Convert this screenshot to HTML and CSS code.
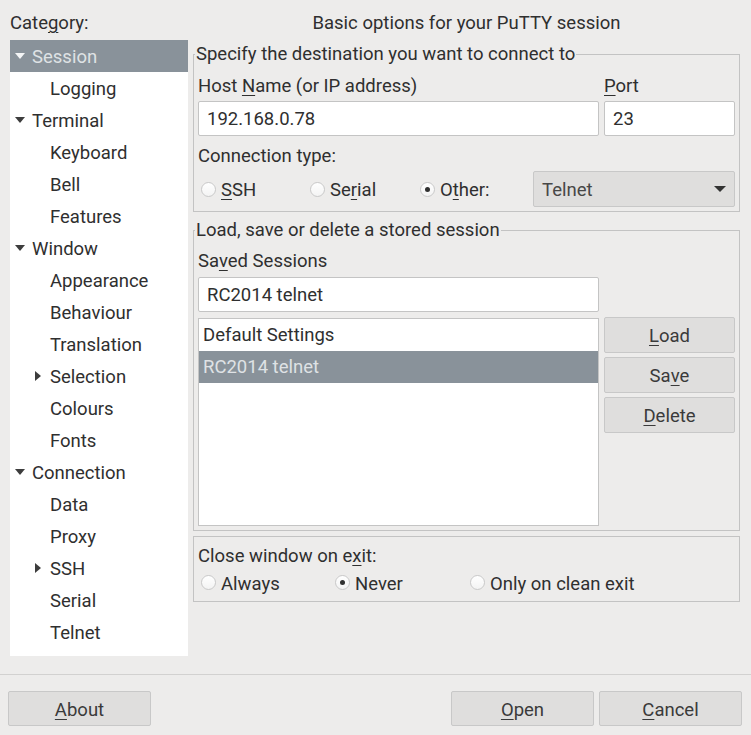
FILE: index.html
```html
<!DOCTYPE html>
<html lang="en">
<head>
<meta charset="utf-8">
<title>PuTTY Configuration</title>
<link rel="stylesheet" href="styles.css">
</head>
<body>
<div class="dialog">
  <div class="panes">
    <div class="category">
      <div class="category-label">Cate<u>g</u>ory:</div>
      <div class="tree">
        <div class="row lvl1 selected"><span class="exp down"></span>Session</div>
        <div class="row lvl2"><span class="exp"></span>Logging</div>
        <div class="row lvl1"><span class="exp down"></span>Terminal</div>
        <div class="row lvl2"><span class="exp"></span>Keyboard</div>
        <div class="row lvl2"><span class="exp"></span>Bell</div>
        <div class="row lvl2"><span class="exp"></span>Features</div>
        <div class="row lvl1"><span class="exp down"></span>Window</div>
        <div class="row lvl2"><span class="exp"></span>Appearance</div>
        <div class="row lvl2"><span class="exp"></span>Behaviour</div>
        <div class="row lvl2"><span class="exp"></span>Translation</div>
        <div class="row lvl2"><span class="exp right"></span>Selection</div>
        <div class="row lvl2"><span class="exp"></span>Colours</div>
        <div class="row lvl2"><span class="exp"></span>Fonts</div>
        <div class="row lvl1"><span class="exp down"></span>Connection</div>
        <div class="row lvl2"><span class="exp"></span>Data</div>
        <div class="row lvl2"><span class="exp"></span>Proxy</div>
        <div class="row lvl2"><span class="exp right"></span>SSH</div>
        <div class="row lvl2"><span class="exp"></span>Serial</div>
        <div class="row lvl2"><span class="exp"></span>Telnet</div>
      </div>
    </div>

    <div class="settings">
      <div class="settings-title">Basic options for your PuTTY session</div>

      <fieldset class="group dest">
        <legend>Specify the destination you want to connect to</legend>
        <div class="dest-grid">
          <div class="label">Host <u>N</u>ame (or IP address)</div>
          <div class="label"><u>P</u>ort</div>
          <div class="entry">192.168.0.78</div>
          <div class="entry">23</div>
        </div>
        <div class="label conn-label">Connection type:</div>
        <div class="conn-row">
          <label class="radio"><span class="dot"></span><span class="radio-text"><u>S</u>SH</span></label>
          <label class="radio"><span class="dot"></span><span class="radio-text">Se<u>r</u>ial</span></label>
          <label class="radio"><span class="dot checked"></span><span class="radio-text">O<u>t</u>her:</span></label>
          <div class="select"><span>Telnet</span><span class="caret"></span></div>
        </div>
      </fieldset>

      <fieldset class="group sessions">
        <legend>Load, save or delete a stored session</legend>
        <div class="sess-grid">
          <div class="label sess-label">Sa<u>v</u>ed Sessions</div>
          <div class="entry sess-entry">RC2014 telnet</div>
          <div class="list">
            <div class="list-row">Default Settings</div>
            <div class="list-row selected">RC2014 telnet</div>
          </div>
          <div class="sess-buttons">
            <div class="btn"><u>L</u>oad</div>
            <div class="btn">Sa<u>v</u>e</div>
            <div class="btn"><u>D</u>elete</div>
          </div>
        </div>
      </fieldset>

      <fieldset class="group closing">
        <div class="label">Close window on e<u>x</u>it:</div>
        <div class="close-row">
          <label class="radio"><span class="dot"></span><span class="radio-text">Always</span></label>
          <label class="radio"><span class="dot checked"></span><span class="radio-text">Never</span></label>
          <label class="radio"><span class="dot"></span><span class="radio-text">Only on clean exit</span></label>
        </div>
      </fieldset>
    </div>
  </div>

  <div class="footer">
    <div class="btn foot-btn"><u>A</u>bout</div>
    <div class="spacer"></div>
    <div class="btn foot-btn"><u>O</u>pen</div>
    <div class="btn foot-btn"><u>C</u>ancel</div>
  </div>
</div>
</body>
</html>
```

FILE: styles.css
```css
html, body {
  margin: 0;
  padding: 0;
}

body {
  width: 751px;
  height: 735px;
  overflow: hidden;
  background: #edeceb;
  color: #2f2f2f;
  font-family: Roboto, "Liberation Sans", sans-serif;
  font-size: 18.5px;
}

u {
  text-decoration-thickness: 1px;
  text-underline-offset: 3px;
}

.dialog {
  display: flex;
  flex-direction: column;
  height: 735px;
}

.panes {
  display: flex;
  gap: 5px;
  padding: 0 11px 0 10px;
  height: 656px;
  flex: none;
}

/* category tree */
.category {
  width: 178px;
  flex: none;
  display: flex;
  flex-direction: column;
}

.category-label {
  box-sizing: border-box;
  height: 40px;
  padding-top: 11px;
  line-height: 24px;
}

.tree {
  background: #ffffff;
  flex: 1;
}

.row {
  box-sizing: border-box;
  height: 32px;
  padding-top: 2px;
  display: flex;
  align-items: center;
  white-space: nowrap;
}

.row.lvl1 { padding-left: 5px; }
.row.lvl2 { padding-left: 25px; }

.row .exp {
  width: 10px;
  height: 10px;
  margin-top: -2px;
  display: flex;
  align-items: center;
  flex: none;
}

.row.lvl1 .exp { margin-right: 7px; }
.row.lvl2 .exp { margin-right: 5px; }

.exp.down::before {
  content: "";
  border-left: 5px solid transparent;
  border-right: 5px solid transparent;
  border-top: 6px solid #3d3d3d;
}

.exp.right::before {
  content: "";
  border-top: 5px solid transparent;
  border-bottom: 5px solid transparent;
  border-left: 6px solid #3d3d3d;
}

.row.selected {
  background: #89929a;
  color: #dfe2e5;
}

.row.selected .exp.down::before {
  border-top-color: #f4f5f6;
}

/* settings side */
.settings {
  flex: 1;
  min-width: 0;
  display: flex;
  flex-direction: column;
}

.settings-title {
  box-sizing: border-box;
  height: 43px;
  padding-top: 11px;
  line-height: 24px;
  text-align: center;
}

.group {
  margin: 0;
  border: 1px solid #c3c3c3;
  padding: 0 4px 4px 4px;
  min-inline-size: 0;
}

.group legend {
  padding: 0 1px;
  margin-left: -3px;
  line-height: 22px;
}

.label {
  padding-top: 1px;
  line-height: 24px;
  white-space: nowrap;
}

.entry {
  box-sizing: border-box;
  height: 35px;
  background: #ffffff;
  border: 1px solid #c4c4c4;
  border-radius: 2px;
  padding-left: 8px;
  padding-top: 2px;
  line-height: 31px;
}

.dest-grid {
  display: grid;
  grid-template-columns: 401px 1fr;
  column-gap: 5px;
  row-gap: 3px;
  margin-top: 8px;
}

.conn-label {
  margin-top: 7px;
}

.conn-row {
  display: grid;
  grid-template-columns: 109px 110px 116px 1fr;
  align-items: center;
  margin-top: 3px;
  height: 36px;
}

.radio {
  display: inline-flex;
  align-items: center;
  gap: 5px;
  margin-left: 3px;
  white-space: nowrap;
}

.radio-text {
  padding-top: 2px;
}

.dot {
  box-sizing: border-box;
  width: 15px;
  height: 15px;
  border-radius: 50%;
  border: 1px solid #c9c9c9;
  background: linear-gradient(#ffffff, #f3f3f3);
  display: flex;
  align-items: center;
  justify-content: center;
  flex: none;
}

.dot.checked::before {
  content: "";
  width: 5px;
  height: 5px;
  border-radius: 50%;
  background: #303030;
}

.select {
  box-sizing: border-box;
  height: 36px;
  background: #dfdedd;
  border: 1px solid #c8c8c8;
  border-radius: 2px;
  padding: 2px 8px 0 8px;
  display: flex;
  align-items: center;
  justify-content: space-between;
  color: #474747;
}

.caret {
  margin-top: -2px;
  border-left: 6px solid transparent;
  border-right: 6px solid transparent;
  border-top: 6px solid #333333;
}

.sessions {
  margin-top: 7px;
}

.sess-grid {
  display: grid;
  grid-template-columns: 401px 1fr;
  column-gap: 5px;
}

.sess-label {
  grid-column: 1;
  margin-top: 7px;
}

.sess-entry {
  grid-column: 1;
  margin-top: 4px;
}

.list {
  grid-column: 1;
  box-sizing: border-box;
  height: 208px;
  margin-top: 6px;
  background: #ffffff;
  border: 1px solid #c4c4c4;
}

.list-row {
  box-sizing: border-box;
  height: 32px;
  padding-top: 1px;
  line-height: 31px;
  padding-left: 4px;
  white-space: nowrap;
}

.list-row.selected {
  background: #89929a;
  color: #dfe2e5;
}

.sess-buttons {
  grid-column: 2;
  grid-row: 3;
  margin-top: 5px;
  display: flex;
  flex-direction: column;
  gap: 4px;
}

.btn {
  box-sizing: border-box;
  height: 36px;
  padding-top: 2px;
  background: #dfdedd;
  border: 1px solid #c8c8c8;
  border-radius: 2px;
  display: flex;
  align-items: center;
  justify-content: center;
  color: #3a3a3a;
}

.closing {
  margin-top: 5px;
  padding-top: 6px;
  padding-bottom: 6px;
}

.close-row {
  display: grid;
  grid-template-columns: 134px 135px 1fr;
  margin-top: 2px;
  height: 25px;
  align-items: center;
}

/* bottom button bar */
.footer {
  margin-top: 18px;
  border-top: 1px solid #d2d1d0;
  padding: 16px 9px 0 8px;
  display: flex;
  gap: 5px;
}

.spacer {
  flex: 1;
}

.foot-btn {
  width: 143px;
  height: 35px;
}
```
